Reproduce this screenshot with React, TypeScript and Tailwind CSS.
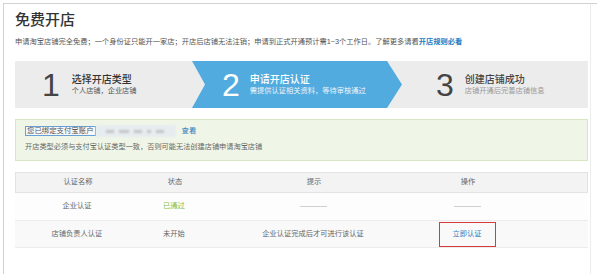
import React from "react";

const font = "font-['Liberation_Sans','Noto_Sans_CJK_SC',sans-serif]";

function Dash() {
  return <span className="inline-block w-[27px] h-px bg-[#d0d0d0]" />;
}

export default function App() {
  return (
    <div className={`w-[597px] h-[274px] bg-white pt-[3px] pl-[3px] overflow-hidden ${font}`}>
      <div className="h-full border-t border-l border-[#d2d2d2]">
        <div className="h-full w-[587px] border-r border-[#ececec] pl-[11px] pr-[2px] pt-[6px]">
          <h1 className="text-[15px] leading-[20px] text-[#333] font-medium">免费开店</h1>
          <p className="mt-[7px] text-[7.25px] leading-[10px] text-[#555] whitespace-nowrap">
            申请淘宝店铺完全免费；一个身份证只能开一家店；开店后店铺无法注销；申请到正式开通预计需1~3个工作日。了解更多请看
            <span className="text-[#1f7cc4] font-bold">开店规则必看</span>
          </p>

          {/* steps */}
          <div className="mt-[14px] h-[47px] flex bg-[#ececec]">
            <div className="w-[177px] flex items-center pl-[27px] gap-[12px]">
              <span className="text-[32px] leading-none text-[#444] font-['Liberation_Sans',sans-serif]">1</span>
              <div className="flex flex-col">
                <span className="text-[10px] leading-[13px] text-[#333] font-medium">选择开店类型</span>
                <span className="text-[7.2px] leading-[10px] text-[#555]">个人店铺，企业店铺</span>
              </div>
            </div>
            <div className="w-[210px] flex items-center pl-[30px] gap-[10px] bg-[#52abde] [clip-path:polygon(0_0,195px_0,100%_50%,195px_100%,0_100%,13px_50%)]">
              <span className="text-[32px] leading-none text-white font-['Liberation_Sans',sans-serif]">2</span>
              <div className="flex flex-col">
                <span className="text-[10px] leading-[13px] text-white font-medium">申请开店认证</span>
                <span className="text-[7.25px] leading-[10px] text-[#eaf5fc]">需提供认证相关资料，等待审核通过</span>
              </div>
            </div>
            <div className="flex-1 flex items-center pl-[34px] gap-[11px]">
              <span className="text-[32px] leading-none text-[#444] font-['Liberation_Sans',sans-serif]">3</span>
              <div className="flex flex-col">
                <span className="text-[10px] leading-[13px] text-[#444] font-medium">创建店铺成功</span>
                <span className="text-[7.25px] leading-[10px] text-[#999]">店铺开通后完善店铺信息</span>
              </div>
            </div>
          </div>

          {/* notice */}
          <div className="mt-[11px] h-[42px] border border-[#d8e6c3] bg-[#f0f6e7] pl-[9px] pt-[5px]">
            <div className="h-[12px] flex items-center text-[7.4px]">
              <span className="h-[10px] flex items-center border border-[#6a9fd6] bg-[#f6f9fc] px-[1px] text-[#555] leading-none">
                您已绑定支付宝账户
              </span>
              <span className="relative h-[12px] w-[80px] bg-[#e6ecf0] blur-[1px] flex items-center gap-[5px] pl-[10px]">
                <span className="w-[8px] h-[3px] bg-[#c4c4c4]" />
                <span className="w-[10px] h-[3px] bg-[#c4c4c4]" />
                <span className="w-[8px] h-[3px] bg-[#c4c4c4]" />
                <span className="w-[4px] h-[3px] bg-[#c4c4c4]" />
                <span className="w-[8px] h-[3px] bg-[#c4c4c4]" />
              </span>
              <span className="ml-[6px] text-[#2a7cc1]">查看</span>
            </div>
            <p className="mt-[5px] text-[7.2px] leading-[10px] text-[#666]">
              开店类型必须与支付宝认证类型一致，否则可能无法创建店铺申请淘宝店铺
            </p>
          </div>

          {/* table */}
          <div className="mt-[11px] text-[7.25px] text-[#666]">
            <div className="grid grid-cols-[124px_70px_208px_100px_1fr] h-[21px] items-center bg-[#f3f3f3] border border-[#e3e3e3] text-center">
              <span>认证名称</span>
              <span>状态</span>
              <span>提示</span>
              <span>操作</span>
              <span />
            </div>
            <div className="grid grid-cols-[124px_70px_208px_100px_1fr] h-[28px] items-center border-b border-[#ececec] bg-[#fdfdfd] text-center">
              <span>企业认证</span>
              <span className="text-[#7dbf45]">已通过</span>
              <span className="flex justify-center"><Dash /></span>
              <span className="flex justify-center"><Dash /></span>
              <span />
            </div>
            <div className="grid grid-cols-[124px_70px_208px_100px_1fr] h-[27px] items-center border-b border-[#ececec] bg-[#f9f9f9] text-center">
              <span>店铺负责人认证</span>
              <span>未开始</span>
              <span>企业认证完成后才可进行该认证</span>
              <span className="flex justify-center self-end">
                <span className="w-[57px] h-[25px] flex items-center justify-center border-[1.5px] border-[#d63a3a] text-[#2a7cc1]">
                  立即认证
                </span>
              </span>
              <span />
            </div>
          </div>
        </div>
      </div>
    </div>
  );
}
